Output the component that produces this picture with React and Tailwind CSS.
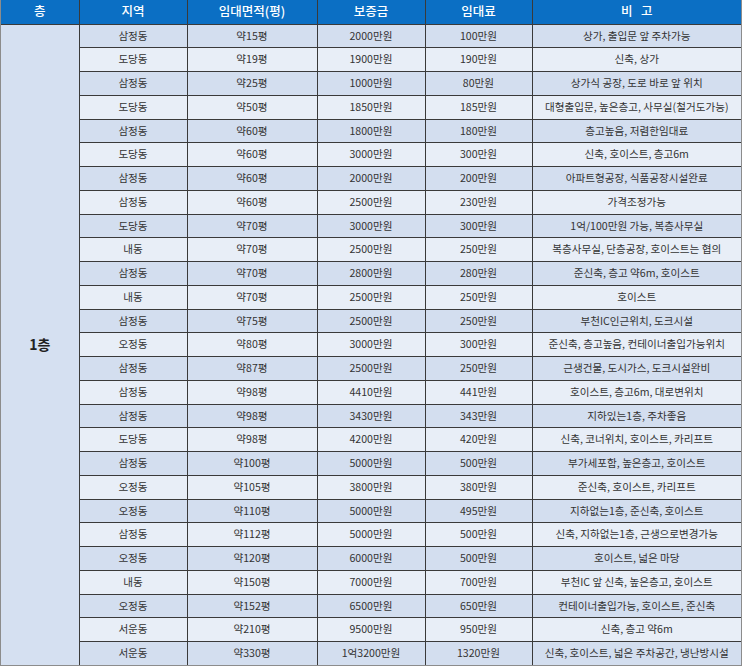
const rows = [
  ['삼정동', '약15평', '2000만원', '100만원', '상가, 출입문 앞 주차가능'],
  ['도당동', '약19평', '1900만원', '190만원', '신축, 상가'],
  ['삼정동', '약25평', '1000만원', '80만원', '상가식 공장, 도로 바로 앞 위치'],
  ['도당동', '약50평', '1850만원', '185만원', '대형출입문, 높은층고, 사무실(철거도가능)'],
  ['삼정동', '약60평', '1800만원', '180만원', '층고높음, 저렴한임대료'],
  ['도당동', '약60평', '3000만원', '300만원', '신축, 호이스트, 층고6m'],
  ['삼정동', '약60평', '2000만원', '200만원', '아파트형공장, 식품공장시설완료'],
  ['삼정동', '약60평', '2500만원', '230만원', '가격조정가능'],
  ['도당동', '약70평', '3000만원', '300만원', '1억/100만원 가능, 복층사무실'],
  ['내동', '약70평', '2500만원', '250만원', '복층사무실, 단층공장, 호이스트는 협의'],
  ['삼정동', '약70평', '2800만원', '280만원', '준신축, 층고 약6m, 호이스트'],
  ['내동', '약70평', '2500만원', '250만원', '호이스트'],
  ['삼정동', '약75평', '2500만원', '250만원', '부천IC인근위치, 도크시설'],
  ['오정동', '약80평', '3000만원', '300만원', '준신축, 층고높음, 컨테이너출입가능위치'],
  ['삼정동', '약87평', '2500만원', '250만원', '근생건물, 도시가스, 도크시설완비'],
  ['삼정동', '약98평', '4410만원', '441만원', '호이스트, 층고6m, 대로변위치'],
  ['삼정동', '약98평', '3430만원', '343만원', '지하있는1층, 주차좋음'],
  ['도당동', '약98평', '4200만원', '420만원', '신축, 코너위치, 호이스트, 카리프트'],
  ['삼정동', '약100평', '5000만원', '500만원', '부가세포함, 높은층고, 호이스트'],
  ['오정동', '약105평', '3800만원', '380만원', '준신축, 호이스트, 카리프트'],
  ['오정동', '약110평', '5000만원', '495만원', '지하없는1층, 준신축, 호이스트'],
  ['삼정동', '약112평', '5000만원', '500만원', '신축, 지하없는1층, 근생으로변경가능'],
  ['오정동', '약120평', '6000만원', '500만원', '호이스트, 넓은 마당'],
  ['내동', '약150평', '7000만원', '700만원', '부천IC 앞 신축, 높은층고, 호이스트'],
  ['오정동', '약152평', '6500만원', '650만원', '컨테이너출입가능, 호이스트, 준신축'],
  ['서운동', '약210평', '9500만원', '950만원', '신축, 층고 약6m'],
  ['서운동', '약330평', '1억3200만원', '1320만원', '신축, 호이스트, 넓은 주차공간, 냉난방시설'],
];

const headers = ['층', '지역', '임대면적(평)', '보증금', '임대료', '비   고'];

export default function App() {
  return (
    <div className="bg-white w-[743px] h-[668px] overflow-hidden" style={{ fontFamily: '"Noto Sans CJK KR", "Noto Sans", sans-serif' }}>
      <div className="w-[742px] border-l border-r border-b border-[#8c8c8c]">
        <table className="w-[740px] table-fixed border-collapse text-[10.6px] text-[#333]">
          <colgroup>
            <col className="w-[78px]" />
            <col className="w-[108px]" />
            <col className="w-[130px]" />
            <col className="w-[108px]" />
            <col className="w-[107px]" />
            <col className="w-[209px]" />
          </colgroup>
          <thead>
            <tr className="h-[24px] bg-[#0b6fc4] text-white text-[12.5px]">
              {headers.map((h, i) => (
                <th
                  key={h}
                  className={`p-0 border-b border-[#3a3a3a] font-medium whitespace-pre ${i > 0 ? 'border-l' : ''}`}
                >
                  {h}
                </th>
              ))}
            </tr>
          </thead>
          <tbody>
            {rows.map((r, i) => (
              <tr
                key={i}
                className={`h-[23.75px] ${i % 2 === 0 ? 'bg-[#d3deef]' : 'bg-[#e8eef7]'}`}
              >
                {i === 0 && (
                  <td rowSpan={rows.length} className="p-0 bg-[#d5e0f1] text-center align-middle text-[14px] font-bold text-[#222] border-r border-[#3a3a3a]">
                    1층
                  </td>
                )}
                {r.map((c, j) => (
                  <td
                    key={j}
                    className={`p-0 text-center whitespace-nowrap leading-none border-[#3a3a3a] ${j > 0 ? 'border-l' : ''} ${i < rows.length - 1 ? 'border-b' : ''}`}
                  >
                    {c}
                  </td>
                ))}
              </tr>
            ))}
          </tbody>
        </table>
      </div>
    </div>
  );
}
